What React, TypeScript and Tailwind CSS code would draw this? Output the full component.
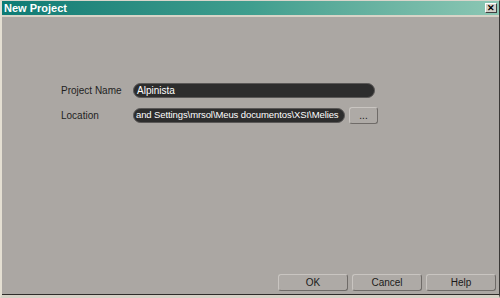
import React from "react"

const font = { fontFamily: '"Liberation Sans", Arial, sans-serif' }

const Button: React.FC<{ label: string; className?: string }> = ({ label, className = "" }) => (
  <button
    className={`h-[17px] rounded-[3px] border border-t-[#c9c5c1] border-l-[#c9c5c1] border-b-[#6f6b68] border-r-[#6f6b68] bg-[#aeaaa6] text-[10px] text-[#1a1a1a] flex items-center justify-center ${className}`}
  >
    {label}
  </button>
)

export default function App() {
  return (
    <div style={font} className="w-[500px] h-[298px] flex flex-col bg-[#aba7a3] border-l-2 border-l-[#e4dfd2] border-r border-r-[#3a3836] border-b-[3px] border-b-[#d6d1c6] border-t border-t-[#d9d6cc] overflow-hidden">
      {/* title bar */}
      <div className="h-[14px] flex items-center justify-between pl-[2px] pr-[2px] bg-gradient-to-r from-[#0c7b74] via-[#3f9e8e] to-[#8cc7b4]">
        <span className="text-[11px] font-bold text-white leading-none">New Project</span>
        <span className="w-[12px] h-[10px] bg-[#d4d0c8] border border-t-white border-l-white border-b-[#404040] border-r-[#404040] flex items-center justify-center text-[9px] font-bold leading-none text-black">
          ✕
        </span>
      </div>
      <div className="h-[2px] bg-[#d8d4c8]" />

      {/* body */}
      <div className="flex-1 flex flex-col border-b border-b-[#2e2c2a]">
        <div className="pt-[66px] pl-[59px] flex flex-col gap-[9px]">
          <div className="flex items-center">
            <span className="w-[72px] text-[10px] text-[#1f1f1f]">Project Name</span>
            <div className="w-[242px] h-[15px] rounded-full bg-[#2d2d2d] border border-[#5a5857] flex items-center pl-[3px] text-[10px] text-white">
              Alpinista
            </div>
          </div>
          <div className="flex items-center">
            <span className="w-[72px] text-[10px] text-[#1f1f1f]">Location</span>
            <div className="w-[212px] h-[15px] rounded-full bg-[#2d2d2d] border border-[#5a5857] flex items-center pl-[2px] text-[9.5px] tracking-[-0.1px] text-white whitespace-nowrap overflow-hidden">
              and Settings\mrsol\Meus documentos\XSI\Melies
            </div>
            <Button label="..." className="ml-[4px] w-[29px] h-[15px] text-[8px]" />
          </div>
        </div>
        <div className="flex-1" />
        <div className="flex justify-end gap-[4px] pr-[3px] pb-[3px]">
          <Button label="OK" className="w-[70px]" />
          <Button label="Cancel" className="w-[70px]" />
          <Button label="Help" className="w-[70px]" />
        </div>
      </div>
    </div>
  )
}
